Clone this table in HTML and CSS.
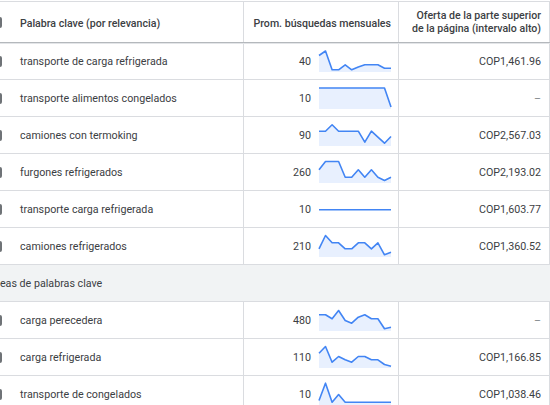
FILE: index.html
```html
<!DOCTYPE html>
<html lang="es">
<head>
  <meta charset="UTF-8" />
  <title>Ideas de palabras clave</title>
  <link rel="stylesheet" href="styles.css">
</head>
<body>
  <div class="table">
    <div class="row head">
      <div class="cell check"><span class="box"></span></div>
      <div class="cell kw single">Palabra clave (por relevancia)</div>
      <div class="cell vol single">Prom. búsquedas mensuales</div>
      <div class="cell bid">Oferta de la parte superior<br>de la página (intervalo alto)</div>
    </div>

    <div class="row">
      <div class="cell check"><span class="box"></span></div>
      <div class="cell kw">transporte de carga refrigerada</div>
      <div class="cell vol">
        <span class="num">40</span>
        <svg class="spark" viewBox="0 0 72 22"><polygon class="area" points="0,5.5 6.5,1 13.1,19.8 19.6,19.8 26.2,14.8 32.7,19.8 39.3,17 45.8,14.8 52.4,14.8 58.9,14.8 65.5,18.2 72,18.2 72,22 0,22"/><polyline class="line" points="0,5.5 6.5,1 13.1,19.8 19.6,19.8 26.2,14.8 32.7,19.8 39.3,17 45.8,14.8 52.4,14.8 58.9,14.8 65.5,18.2 72,18.2"/></svg>
      </div>
      <div class="cell bid">COP1,461.96</div>
    </div>

    <div class="row">
      <div class="cell check"><span class="box"></span></div>
      <div class="cell kw">transporte alimentos congelados</div>
      <div class="cell vol">
        <span class="num">10</span>
        <svg class="spark" viewBox="0 0 72 22"><polygon class="area" points="0,1 65.5,1 72,20 72,22 0,22"/><polyline class="line" points="0,1 65.5,1 72,20"/></svg>
      </div>
      <div class="cell bid"><span class="dash">–</span></div>
    </div>

    <div class="row">
      <div class="cell check"><span class="box"></span></div>
      <div class="cell kw">camiones con termoking</div>
      <div class="cell vol">
        <span class="num">90</span>
        <svg class="spark" viewBox="0 0 72 22"><polygon class="area" points="0,7.2 6.5,7.2 13.1,0.8 19.6,7.2 26.2,7.2 32.7,7.2 39.3,7.2 45.8,18.2 52.4,7.2 58.9,13.2 65.5,19.2 72,12.5 72,22 0,22"/><polyline class="line" points="0,7.2 6.5,7.2 13.1,0.8 19.6,7.2 26.2,7.2 32.7,7.2 39.3,7.2 45.8,18.2 52.4,7.2 58.9,13.2 65.5,19.2 72,12.5"/></svg>
      </div>
      <div class="cell bid">COP2,567.03</div>
    </div>

    <div class="row">
      <div class="cell check"><span class="box"></span></div>
      <div class="cell kw">furgones refrigerados</div>
      <div class="cell vol">
        <span class="num">260</span>
        <svg class="spark" viewBox="0 0 72 22"><polygon class="area" points="0,8.8 6.5,0.5 13.1,0.5 19.6,0.5 26.2,16.2 32.7,16.2 39.3,8.8 45.8,16.2 52.4,8.8 58.9,16.2 65.5,19.5 72,16.2 72,22 0,22"/><polyline class="line" points="0,8.8 6.5,0.5 13.1,0.5 19.6,0.5 26.2,16.2 32.7,16.2 39.3,8.8 45.8,16.2 52.4,8.8 58.9,16.2 65.5,19.5 72,16.2"/></svg>
      </div>
      <div class="cell bid">COP2,193.02</div>
    </div>

    <div class="row">
      <div class="cell check"><span class="box"></span></div>
      <div class="cell kw">transporte carga refrigerada</div>
      <div class="cell vol">
        <span class="num">10</span>
        <svg class="spark" viewBox="0 0 72 22"><polyline class="line" points="0,11.8 72,11.8"/></svg>
      </div>
      <div class="cell bid">COP1,603.77</div>
    </div>

    <div class="row">
      <div class="cell check"><span class="box"></span></div>
      <div class="cell kw">camiones refrigerados</div>
      <div class="cell vol">
        <span class="num">210</span>
        <svg class="spark" viewBox="0 0 72 22"><polygon class="area" points="0,13.8 6.5,0.5 13.1,7.8 19.6,7.8 26.2,13.8 32.7,13.8 39.3,7.8 45.8,7.8 52.4,13.8 58.9,7.8 65.5,19.8 72,17.2 72,22 0,22"/><polyline class="line" points="0,13.8 6.5,0.5 13.1,7.8 19.6,7.8 26.2,13.8 32.7,13.8 39.3,7.8 45.8,7.8 52.4,13.8 58.9,7.8 65.5,19.8 72,17.2"/></svg>
      </div>
      <div class="cell bid">COP1,360.52</div>
    </div>

    <div class="row group">Ideas de palabras clave</div>

    <div class="row">
      <div class="cell check"><span class="box"></span></div>
      <div class="cell kw">carga perecedera</div>
      <div class="cell vol">
        <span class="num">480</span>
        <svg class="spark" viewBox="0 0 72 22"><polygon class="area" points="0,5.8 6.5,5.8 13.1,9.8 19.6,1.5 26.2,11.5 32.7,14.2 39.3,8.2 45.8,5.8 52.4,9.8 58.9,9.8 65.5,19.8 72,18.2 72,22 0,22"/><polyline class="line" points="0,5.8 6.5,5.8 13.1,9.8 19.6,1.5 26.2,11.5 32.7,14.2 39.3,8.2 45.8,5.8 52.4,9.8 58.9,9.8 65.5,19.8 72,18.2"/></svg>
      </div>
      <div class="cell bid"><span class="dash">–</span></div>
    </div>

    <div class="row">
      <div class="cell check"><span class="box"></span></div>
      <div class="cell kw">carga refrigerada</div>
      <div class="cell vol">
        <span class="num">110</span>
        <svg class="spark" viewBox="0 0 72 22"><polygon class="area" points="0,7.2 6.5,0.5 13.1,16.2 19.6,10.5 26.2,13.8 32.7,16.2 39.3,10.5 45.8,10.5 52.4,13.8 58.9,13.8 65.5,18.5 72,20.2 72,22 0,22"/><polyline class="line" points="0,7.2 6.5,0.5 13.1,16.2 19.6,10.5 26.2,13.8 32.7,16.2 39.3,10.5 45.8,10.5 52.4,13.8 58.9,13.8 65.5,18.5 72,20.2"/></svg>
      </div>
      <div class="cell bid">COP1,166.85</div>
    </div>

    <div class="row">
      <div class="cell check"><span class="box"></span></div>
      <div class="cell kw">transporte de congelados</div>
      <div class="cell vol">
        <span class="num">10</span>
        <svg class="spark" viewBox="0 0 72 22"><polygon class="area" points="0,17.5 6.5,0.2 13.1,19.2 19.6,11.5 26.2,19.2 72,19.2 72,22 0,22"/><polyline class="line" points="0,17.5 6.5,0.2 13.1,19.2 19.6,11.5 26.2,19.2 72,19.2"/></svg>
      </div>
      <div class="cell bid">COP1,038.46</div>
    </div>
  </div>
</body>
</html>
```

FILE: styles.css
```css
* {
  box-sizing: border-box;
}

body {
  margin: 0;
  background: #fff;
  color: #3c4043;
  font-family: Roboto, "Noto Sans", sans-serif;
  font-size: 10.7px;
  overflow: hidden;
}

.table {
  width: 570px;
  margin-left: -20px;
  padding-top: 1px;
}

.row {
  display: grid;
  grid-template-columns: 32px 232px 155px 151px;
  height: 37px;
  border-bottom: 1px solid #dadce0;
}

.cell {
  display: flex;
  align-items: center;
}

.check {
  padding-left: 9px;
}

.box {
  width: 13px;
  height: 11px;
  border: 2px solid #6f7377;
  border-radius: 2px;
}

.kw {
  padding-left: 8px;
  border-right: 1px solid #dadce0;
}

.vol {
  justify-content: flex-end;
  gap: 8px;
  padding-right: 7px;
  border-right: 1px solid #dadce0;
}

.bid {
  justify-content: flex-end;
  text-align: right;
  padding-right: 8px;
  border-right: 1px solid #dadce0;
}

.dash {
  color: #80868b;
}

.spark {
  width: 72px;
  height: 22px;
  overflow: visible;
}

.spark .area {
  fill: #e8f0fe;
}

.spark .line {
  fill: none;
  stroke: #4285f4;
  stroke-width: 1.6;
  stroke-linejoin: round;
}

.head {
  position: relative;
  z-index: 1;
  height: 42px;
  border-top: 1px solid #dadce0;
  border-bottom: 1px solid #b4b8bc;
  box-shadow: 0 1px 0 #e3e5e8;
  font-weight: 500;
  font-size: 10.6px;
  line-height: 13px;
  color: #3c4043;
}

.head .single {
  padding-top: 3px;
}

.group {
  display: flex;
  align-items: center;
  padding-left: 11px;
  background: #f1f3f4;
}
```
